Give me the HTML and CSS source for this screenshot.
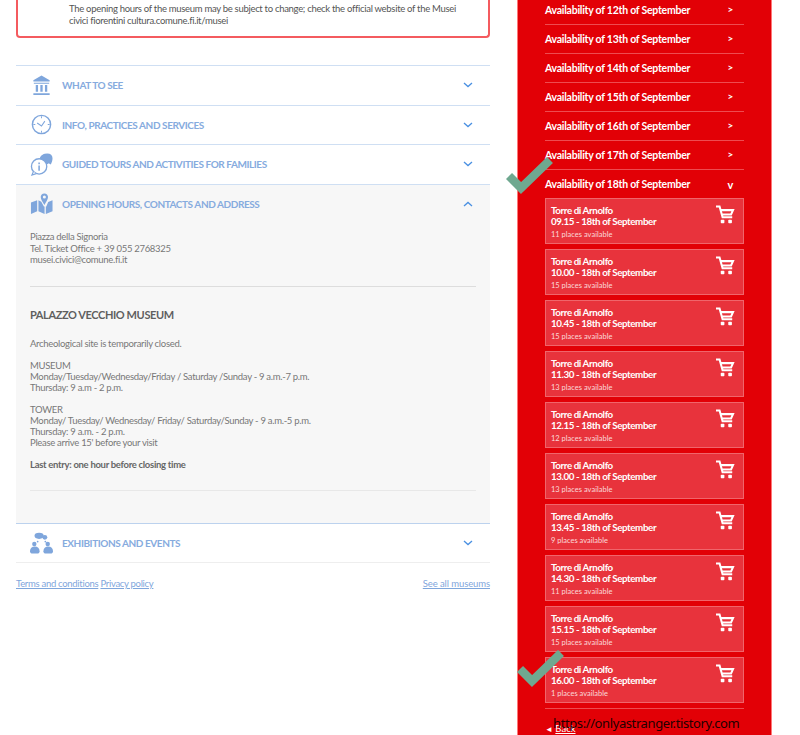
FILE: index.html
```html
<!DOCTYPE html>
<html lang="en">
<head>
<meta charset="utf-8">
<title>Palazzo Vecchio Museum</title>
<link rel="stylesheet" href="styles.css">
</head>
<body>
<svg class="sprite" width="0" height="0" aria-hidden="true">
  <symbol id="cart" viewBox="0 0 24 24"><path fill="none" stroke="currentColor" stroke-width="2.600" d="M0 2h4.500l3.800 13.500h12.200M5.500 6.500h16l-2.500 5.500H7.500"/><rect x="6" y="18.500" width="4.600" height="4.500" rx="1" fill="currentColor"/><rect x="15.500" y="18.500" width="4.600" height="4.500" rx="1" fill="currentColor"/></symbol>
  <symbol id="chev-down" viewBox="0 0 10 6"><path d="M1 1l4 3.600L9 1" fill="none" stroke="currentColor" stroke-width="1.300"/></symbol>
</svg>
<div class="page">
  <main class="left">
    <div class="alert">The opening hours of the museum may be subject to change; check the official website of the Musei civici fiorentini cultura.comune.fi.it/musei</div>
    <section class="accordion">
      <div class="acc-head">
        <svg class="acc-icon" viewBox="0 0 24 24"><path fill="currentColor" d="M12 1.500L3.500 6.500v1.300h17V6.500z M4 9h16v1.200H4z M6 11.500h2.400v7H6z M10.800 11.500h2.400v7h-2.400z M15.600 11.500H18v7h-2.400z M3.500 20.200h17v1.600h-17z"/></svg>
        <span class="acc-title">WHAT TO SEE</span>
        <svg class="chev"><use href="#chev-down"/></svg>
      </div>
      <div class="acc-head">
        <svg class="acc-icon" viewBox="0 0 24 24"><circle cx="12" cy="12" r="9.500" fill="none" stroke="currentColor" stroke-width="1.500"/><path d="M7.500 10.500l4.500 3 3.500-5" fill="none" stroke="currentColor" stroke-width="1.100"/><path fill="currentColor" d="M11.500 3.500h1v2h-1z M11.500 18.500h1v2h-1z M3.500 11.500h2v1h-2z M18.500 11.500h2v1h-2z"/></svg>
        <span class="acc-title">INFO, PRACTICES AND SERVICES</span>
        <svg class="chev"><use href="#chev-down"/></svg>
      </div>
      <div class="acc-head">
        <svg class="acc-icon" viewBox="0 0 24 24"><path fill="currentColor" d="M10 6c1-3.500 4-5.500 8-5.500 3.500 0 5.500 2 5.500 5 0 2.500-.8 4.500-1.800 6.500L19 10.500c-1-3-4-4.500-9-4.500z"/><circle cx="16" cy="6.500" r="5.500" fill="currentColor"/><circle cx="9.500" cy="14" r="8" fill="#fff" stroke="currentColor" stroke-width="1.400"/><path d="M3.500 19.500L2 23l4.500-1.500" fill="#fff" stroke="currentColor" stroke-width="1.200"/><path fill="currentColor" d="M8.700 13h1.600v5.500H8.700z M8.700 10h1.600v1.800H8.700z"/></svg>
        <span class="acc-title">GUIDED TOURS AND ACTIVITIES FOR FAMILIES</span>
        <svg class="chev"><use href="#chev-down"/></svg>
      </div>
      <div class="acc-open">
        <div class="acc-head acc-head-open">
          <svg class="acc-icon" viewBox="0 0 24 24"><path fill="currentColor" d="M1 11l6.500-2.500V20L1 23z M8.800 8.500l3 1.700 2.700 5 .7 0V23l-6.400-3z M16.500 15h.5l2-4.500 4.500-2V20l-7 3z"/><path fill="currentColor" fill-rule="evenodd" d="M15 1.500c2.300 0 3.800 1.700 3.800 3.700 0 2.500-2 5-3.800 8.300-1.800-3.300-3.800-5.800-3.800-8.300 0-2 1.500-3.700 3.800-3.700z M15 3.600a1.600 1.600 0 1 0 0 3.200 1.600 1.600 0 0 0 0-3.200z"/></svg>
          <span class="acc-title">OPENING HOURS, CONTACTS AND ADDRESS</span>
          <svg class="chev chev-up"><use href="#chev-down"/></svg>
        </div>
        <div class="acc-body">
          <p class="address">Piazza della Signoria<br>Tel. Ticket Office + 39 055 2768325<br>musei.civici@comune.fi.it</p>
          <div class="museum">
            <h2 class="museum-title">PALAZZO VECCHIO MUSEUM</h2>
            <p class="para">Archeological site is temporarily closed.</p>
            <p class="para">MUSEUM<br>Monday/Tuesday/Wednesday/Friday / Saturday /Sunday - 9 a.m.-7 p.m.<br>Thursday: 9 a.m - 2 p.m.</p>
            <p class="para">TOWER<br>Monday/ Tuesday/ Wednesday/ Friday/ Saturday/Sunday - 9 a.m.-5 p.m.<br>Thursday: 9 a.m. - 2 p.m.<br>Please arrive 15' before your visit</p>
            <p class="para strong">Last entry: one hour before closing time</p>
          </div>
        </div>
      </div>
      <div class="acc-head acc-last">
        <svg class="acc-icon" viewBox="0 0 24 24"><ellipse cx="9.500" cy="4" rx="4.800" ry="3.200" fill="currentColor"/><circle cx="15.500" cy="5.500" r="2.500" fill="currentColor"/><circle cx="4.500" cy="12.500" r="2.300" fill="currentColor"/><path fill="currentColor" d="M0 20c0-3 2-4.800 5-4.800s5 1.800 5 4.800c0 1.500-1 2.500-2.500 2.500h-5C1 22.500 0 21.500 0 20z"/><circle cx="18.500" cy="12.500" r="2.300" fill="currentColor"/><path fill="currentColor" d="M14 20c0-3 2-4.800 5-4.800s5 1.800 5 4.800c0 1.500-1 2.500-2.500 2.500h-5c-1.500 0-2.500-1-2.500-2.500z"/><circle cx="8" cy="10" r=".9" fill="currentColor"/><circle cx="16" cy="10" r=".9" fill="currentColor"/></svg>
        <span class="acc-title">EXHIBITIONS AND EVENTS</span>
        <svg class="chev"><use href="#chev-down"/></svg>
      </div>
    </section>
    <footer class="foot">
      <div class="foot-links"><a href="#">Terms and conditions</a> <a href="#">Privacy policy</a></div>
      <a class="foot-all" href="#">See all museums</a>
    </footer>
  </main>
  <aside class="panel">
    <div class="day"><span>Availability of 12th of September</span><span class="mark">&gt;</span></div>
    <div class="day"><span>Availability of 13th of September</span><span class="mark">&gt;</span></div>
    <div class="day"><span>Availability of 14th of September</span><span class="mark">&gt;</span></div>
    <div class="day"><span>Availability of 15th of September</span><span class="mark">&gt;</span></div>
    <div class="day"><span>Availability of 16th of September</span><span class="mark">&gt;</span></div>
    <div class="day"><span>Availability of 17th of September</span><span class="mark">&gt;</span></div>
    <div class="day day-open"><span>Availability of 18th of September</span><span class="mark mark-open">v</span></div>
    <div class="slots">
      <div class="slot"><div class="slot-text"><b>Torre di Arnolfo</b><b>09.15 - 18th of September</b><small>11 places available</small></div><svg class="cart"><use href="#cart"/></svg></div>
      <div class="slot"><div class="slot-text"><b>Torre di Arnolfo</b><b>10.00 - 18th of September</b><small>15 places available</small></div><svg class="cart"><use href="#cart"/></svg></div>
      <div class="slot"><div class="slot-text"><b>Torre di Arnolfo</b><b>10.45 - 18th of September</b><small>15 places available</small></div><svg class="cart"><use href="#cart"/></svg></div>
      <div class="slot"><div class="slot-text"><b>Torre di Arnolfo</b><b>11.30 - 18th of September</b><small>13 places available</small></div><svg class="cart"><use href="#cart"/></svg></div>
      <div class="slot"><div class="slot-text"><b>Torre di Arnolfo</b><b>12.15 - 18th of September</b><small>12 places available</small></div><svg class="cart"><use href="#cart"/></svg></div>
      <div class="slot"><div class="slot-text"><b>Torre di Arnolfo</b><b>13.00 - 18th of September</b><small>13 places available</small></div><svg class="cart"><use href="#cart"/></svg></div>
      <div class="slot"><div class="slot-text"><b>Torre di Arnolfo</b><b>13.45 - 18th of September</b><small>9 places available</small></div><svg class="cart"><use href="#cart"/></svg></div>
      <div class="slot"><div class="slot-text"><b>Torre di Arnolfo</b><b>14.30 - 18th of September</b><small>11 places available</small></div><svg class="cart"><use href="#cart"/></svg></div>
      <div class="slot"><div class="slot-text"><b>Torre di Arnolfo</b><b>15.15 - 18th of September</b><small>15 places available</small></div><svg class="cart"><use href="#cart"/></svg></div>
      <div class="slot"><div class="slot-text"><b>Torre di Arnolfo</b><b>16.00 - 18th of September</b><small>1 places available</small></div><svg class="cart"><use href="#cart"/></svg></div>
    </div>
    <div class="back"><span class="back-arrow">&#9668;</span> <a href="#">Back</a></div>
  </aside>
  <svg class="check check-a" viewBox="0 0 50 42"><path d="M3 19l12 12L44 3" fill="none" stroke="#6fa890" stroke-width="8.500"/></svg>
  <svg class="check check-b" viewBox="0 0 50 42"><path d="M3 19l12 12L44 3" fill="none" stroke="#6fa890" stroke-width="8.500"/></svg>
  <div class="watermark">https://onlyastranger.tistory.com</div>
</div>
</body>
</html>
```
FILE: styles.css
```css
* { box-sizing: border-box; }
html, body { margin: 0; padding: 0; background: #fff; }
body { font-family: "Lato", "Noto Sans", sans-serif; }
.sprite { position: absolute; }
.page { position: relative; display: flex; width: 800px; height: 735px; overflow: hidden; padding-left: 16px; }
.left { width: 474px; flex: none; }
.alert { height: 38px; padding: 3px 30px 0 51px; border: 2px solid #f45b5f; border-top: 0; border-radius: 0 0 4px 4px; font-size: 9.500px; letter-spacing: -.3px; line-height: 11.500px; color: #555; margin-bottom: 27px; }
.accordion { color: #7fa6dc; }
.acc-head { display: flex; align-items: center; height: 39.500px; padding: 0 17px 0 14px; border-top: 1px solid #cfdff3; }
.acc-icon { width: 23px; height: 23px; flex: none; color: #7fa6dc; }
.acc-title { margin-left: 9px; flex: 1; font-size: 10px; letter-spacing: -.42px; font-weight: 700; color: #86abde; }
.chev { width: 10px; height: 6px; color: #4a90e2; flex: none; }
.chev-up { transform: rotate(180deg); }
.acc-open { background: #f7f7f7; height: 339.500px; }
.acc-body { padding: 8px 14px 0; color: #777; font-size: 9.500px; letter-spacing: -.3px; line-height: 11.500px; }
.address { margin: 0; padding-bottom: 20px; border-bottom: 1px solid #ddd; }
.museum { height: 204px; border-bottom: 1px solid #e8e8e8; padding-top: 21px; }
.museum-title { margin: 0 0 16px; font-size: 11px; letter-spacing: -.4px; line-height: 14px; font-weight: 700; color: #5f5f5f; }
.para { margin: 0 0 11px; line-height: 11px; }
.strong { font-weight: 700; color: #666; }
.acc-last { border-top-color: #bcd2ee; border-bottom: 1px solid #eee; height: 40px; }
.foot { display: flex; justify-content: space-between; margin-top: 14px; font-size: 9.500px; letter-spacing: -.3px; line-height: 13px; }
.foot a { color: #7fa6dc; }
.foot .foot-all { letter-spacing: -.1px; }
.panel { width: 255px; margin-left: 27px; flex: none; padding: 0 27px; background: #e20006; border-left: 1px solid #f77; border-right: 1px solid #f77; color: #fff; height: 735px; }
.day { display: flex; justify-content: space-between; align-items: center; height: 29px; padding-right: 11px; border-bottom: 1.500px solid #ee4b50; font-size: 10.500px; letter-spacing: -.25px; font-weight: 700; }
.day:first-child { margin-top: -4px; }
.day-open { border-bottom: 0; height: 28px; }
.mark { font-size: 10px; margin-bottom: 3px; }
.mark-open { font-size: 11px; margin-bottom: 0; }
.slots { display: flex; flex-direction: column; gap: 5px; padding-bottom: 5px; border-bottom: 1.500px solid #ee4b50; }
.slot { display: flex; justify-content: space-between; height: 46px; padding: 5.500px 8px 0 5px; background: #e8333c; border: 1px solid #f0656b; }
.slot-text { display: flex; flex-direction: column; font-size: 9.800px; letter-spacing: -.4px; line-height: 11px; }
.slot-text small { margin-top: 2px; font-size: 7.500px; letter-spacing: 0; line-height: 11px; color: #fbdada; }
.cart { width: 19px; height: 19px; color: #fff; }
.back { margin-top: 14px; font-size: 9.500px; line-height: 12px; }
.back a { color: #fff; }
.back-arrow { font-size: 8px; }
.check { position: absolute; width: 50px; height: 42px; }
.check-a { left: 506px; top: 157px; }
.check-b { left: 517px; top: 650px; }
.watermark { position: absolute; left: 553px; top: 714px; font-family: "Noto Sans", sans-serif; font-size: 13px; letter-spacing: -.4px; line-height: 18px; color: #200; }
```
